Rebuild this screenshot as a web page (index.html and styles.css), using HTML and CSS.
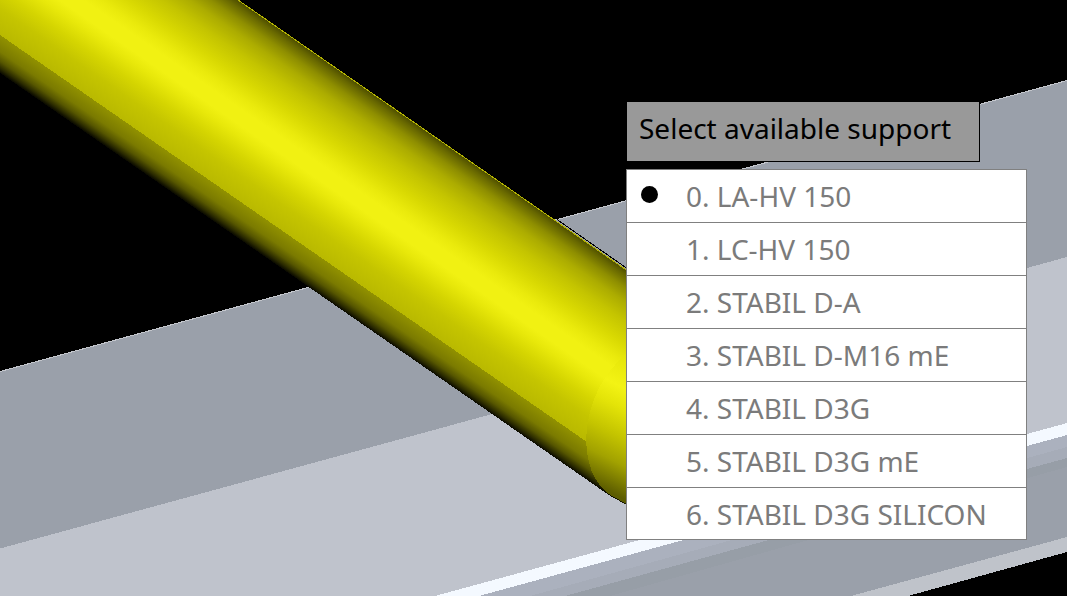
FILE: index.html
```html
<!DOCTYPE html>
<html lang="en">
<head>
<meta charset="utf-8">
<meta name="viewport" content="width=device-width, initial-scale=1">
<title>Select available support</title>
<link rel="stylesheet" href="styles.css">
</head>
<body>
<main class="viewport">
  <svg class="scene" viewBox="0 0 1067 596" preserveAspectRatio="xMidYMid slice" aria-hidden="true">
    <defs>
      <linearGradient id="pipe" gradientUnits="userSpaceOnUse" x1="238" y1="0" x2="126.5" y2="160.8">
        <stop offset="0" stop-color="#4c4c00"/>
        <stop offset="0.03" stop-color="#686800"/>
        <stop offset="0.08" stop-color="#8e8e00"/>
        <stop offset="0.14" stop-color="#acac00"/>
        <stop offset="0.22" stop-color="#c4c400"/>
        <stop offset="0.32" stop-color="#d9d902"/>
        <stop offset="0.4" stop-color="#eaea0c"/>
        <stop offset="0.45" stop-color="#f1f112"/>
        <stop offset="0.52" stop-color="#f1f112"/>
        <stop offset="0.57" stop-color="#e8e80a"/>
        <stop offset="0.65" stop-color="#d5d501"/>
        <stop offset="0.73" stop-color="#c5c500"/>
        <stop offset="0.84" stop-color="#b9b900"/>
        <stop offset="0.84" stop-color="#919100"/>
        <stop offset="0.91" stop-color="#7a7a00"/>
        <stop offset="0.95" stop-color="#565600"/>
        <stop offset="0.98" stop-color="#2a2a00"/>
        <stop offset="1" stop-color="#080800"/>
      </linearGradient>
      <linearGradient id="elbow" gradientUnits="userSpaceOnUse" x1="626" y1="350" x2="566" y2="470">
        <stop offset="0" stop-color="#e2e205"/>
        <stop offset="0.26" stop-color="#f3f314"/>
        <stop offset="0.4" stop-color="#e4e408"/>
        <stop offset="0.6" stop-color="#c4c400"/>
        <stop offset="0.78" stop-color="#a2a200"/>
        <stop offset="0.9" stop-color="#7c7c00"/>
        <stop offset="1" stop-color="#5c5c00"/>
      </linearGradient>
    </defs>
    <g shape-rendering="crispEdges">
      <path fill="#9aa0aa" d="M0 371 1067 80V596H0z"/>
      <path fill="none" stroke="#c3c6cc" d="M0 371.500 1067 80.500"/>
      <path fill="#bfc3cc" d="M0 548.500 1067 257V423L435 596H0z"/>
      <path fill="#f4f9ff" d="M435 596 1067 423V435L479 596z"/>
      <path fill="#abb1be" d="M479 596 1067 435V447L530 596z"/>
      <path fill="#a6acb8" d="M530 596 1067 447V458L565 596z"/>
      <path fill="#979ea7" d="M565 596 1067 458V467L610 596z"/>
      <path fill="#bfc3ca" d="M851 596 1067 537V552L908 596z"/>
      <path fill="#000" d="M908 596 1067 552V596z"/>
      <path fill="url(#pipe)" d="M0 0H238L640 279.500V516L606 493 0 73z"/>
      <path fill="none" stroke="#000" d="M557 219.500 640 277.500"/>
      <path fill="none" stroke="#b4b400" d="M238 0 640 279.500"/>
      <path fill="#bfc3cc" d="M612 497 640 512V530H600z"/>
      <path fill="url(#elbow)" d="M640 342 626 354Q610 368 600 386 587 410 586 440 587 464 595 478 602 490 612 496L640 511z"/>
    </g>
  </svg>

  <form class="popup">
    <h1 class="popup-title" id="support-title">Select available support</h1>
    <div class="options" role="radiogroup" aria-labelledby="support-title">
      <label class="option"><input class="mark" type="radio" name="support" checked><span>0. LA-HV 150</span></label>
      <label class="option"><input class="mark" type="radio" name="support"><span>1. LC-HV 150</span></label>
      <label class="option"><input class="mark" type="radio" name="support"><span>2. STABIL D-A</span></label>
      <label class="option"><input class="mark" type="radio" name="support"><span>3. STABIL D-M16 mE</span></label>
      <label class="option"><input class="mark" type="radio" name="support"><span>4. STABIL D3G</span></label>
      <label class="option"><input class="mark" type="radio" name="support"><span>5. STABIL D3G mE</span></label>
      <label class="option"><input class="mark" type="radio" name="support"><span>6. STABIL D3G SILICON</span></label>
    </div>
  </form>
</main>
</body>
</html>
```
FILE: styles.css
```css
* {
  box-sizing: border-box;
}

body {
  margin: 0;
  background: #000;
  font-family: "Noto Sans", "Open Sans", sans-serif;
}

.viewport {
  position: relative;
  display: flex;
  justify-content: flex-end;
  align-items: flex-start;
  min-height: 100vh;
  padding: 101px 40px 40px;
  overflow: hidden;
}

.scene {
  position: absolute;
  inset: 0;
  width: 100%;
  height: 100%;
}

/* The popup floats over the 3D scene */
.popup {
  position: relative;
  display: flex;
  flex-direction: column;
  align-items: flex-start;
  gap: 7px;
  margin: 0;
}

.popup-title {
  margin: 0;
  padding: 7px 28px 13px 12px;
  border: 1px solid #000;
  background: #999;
  color: #000;
  font-size: 28px;
  font-weight: 400;
  line-height: 39px;
  white-space: nowrap;
}

.options {
  display: flex;
  flex-direction: column;
  width: 401px;
  max-width: 100%;
  border: 1px solid #808080;
  background: #fff;
}

.option {
  display: flex;
  align-items: flex-start;
  gap: 28px;
  padding: 6px 14px;
  color: #7b7b7b;
  font-size: 28px;
  line-height: 40px;
  white-space: nowrap;
}

.option + .option {
  border-top: 1px solid #808080;
}

.option:last-child {
  padding-bottom: 5px;
}

.mark {
  appearance: none;
  flex: none;
  width: 17px;
  height: 17px;
  margin: 10px 0 0;
  border-radius: 50%;
}

.mark:checked {
  background: #000;
}
```
